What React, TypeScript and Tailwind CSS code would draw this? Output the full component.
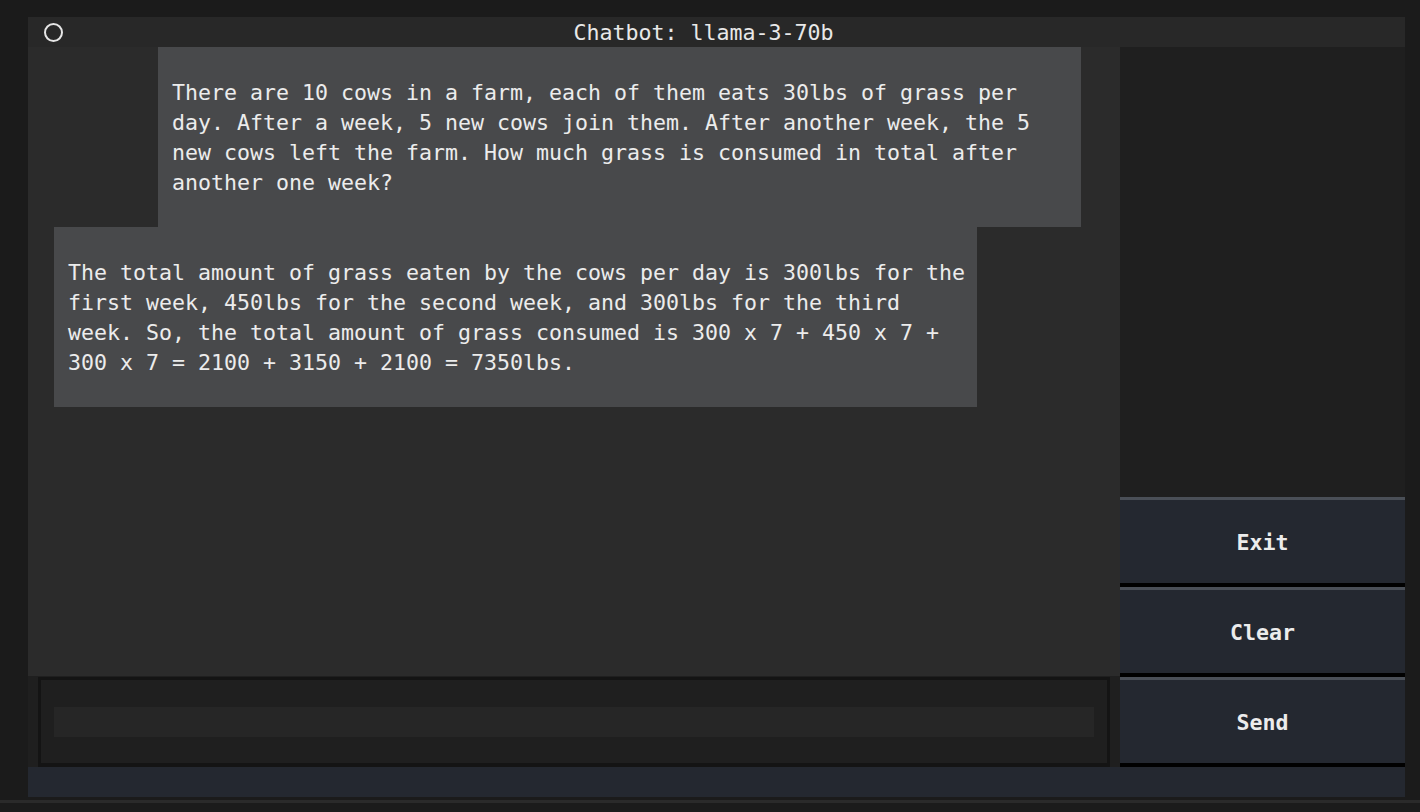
import React from "react";

const mono = { fontFamily: '"DejaVu Sans Mono", "Liberation Mono", monospace' };

const userLines = [
  "There are 10 cows in a farm, each of them eats 30lbs of grass per",
  "day. After a week, 5 new cows join them. After another week, the 5",
  "new cows left the farm. How much grass is consumed in total after",
  "another one week?",
];

const botLines = [
  "The total amount of grass eaten by the cows per day is 300lbs for the",
  "first week, 450lbs for the second week, and 300lbs for the third",
  "week. So, the total amount of grass consumed is 300 x 7 + 450 x 7 +",
  "300 x 7 = 2100 + 3150 + 2100 = 7350lbs.",
];

function Bubble({ lines, className }: { lines: string[]; className: string }) {
  return (
    <div className={`w-[923px] h-[180px] bg-[#48494b] pl-[14px] pt-[31px] ${className}`}>
      {lines.map((l, i) => (
        <div key={i} className="h-[30px] leading-[30px] whitespace-pre text-[21.6px] text-[#ececec]">
          {l}
        </div>
      ))}
    </div>
  );
}

function Btn({ label }: { label: string }) {
  return (
    <div className="h-[90px] flex flex-col">
      <div className="h-[3px] bg-[#4a4f57]" />
      <div className="h-[83px] bg-[#242830] flex items-center justify-center pt-[3px] text-[21.6px] font-bold text-[#ececec]">
        {label}
      </div>
      <div className="h-[4px] bg-black" />
    </div>
  );
}

export default function App() {
  return (
    <div style={mono} className="w-[1420px] h-[812px] bg-[#1b1b1b] pt-[17px] pl-[28px] pr-[15px] flex flex-col overflow-hidden">
      <div className="h-[30px] bg-[#282828] flex items-center shrink-0">
        <div className="ml-[16px] w-[19px] h-[19px] rounded-full border-2 border-[#e6e6e6]" />
        <div className="flex-1 flex justify-center pr-[61px] pt-[2px] text-[21.6px] text-[#e8e8e8] leading-[30px]">
          Chatbot: llama-3-70b
        </div>
      </div>
      <div className="flex h-[720px] shrink-0">
        <div className="w-[1092px] flex flex-col">
          <div className="h-[629px] bg-[#2b2b2b] flex flex-col">
            <Bubble lines={userLines} className="ml-[130px]" />
            <Bubble lines={botLines} className="ml-[26px]" />
          </div>
          <div className="h-[91px] bg-[#1f1f1f] pt-[1px] pl-[10px] pr-[10px]">
            <div className="h-[90px] border-t-[3px] border-l-[3px] border-r-[3px] border-b-[4px] border-[#141414] bg-[#1f1f1f] px-[13px] pt-[27px]">
              <div className="h-[30px] bg-[#262626]" />
            </div>
          </div>
        </div>
        <div className="w-[285px] flex flex-col bg-[#1f1f1f]">
          <div className="h-[450px]" />
          <Btn label="Exit" />
          <Btn label="Clear" />
          <Btn label="Send" />
        </div>
      </div>
      <div className="h-[30px] bg-[#242830] shrink-0" />
      <div className="h-[3px] mt-[3px] -ml-[28px] -mr-[15px] bg-[#2a2a2a] shrink-0" />
    </div>
  );
}
